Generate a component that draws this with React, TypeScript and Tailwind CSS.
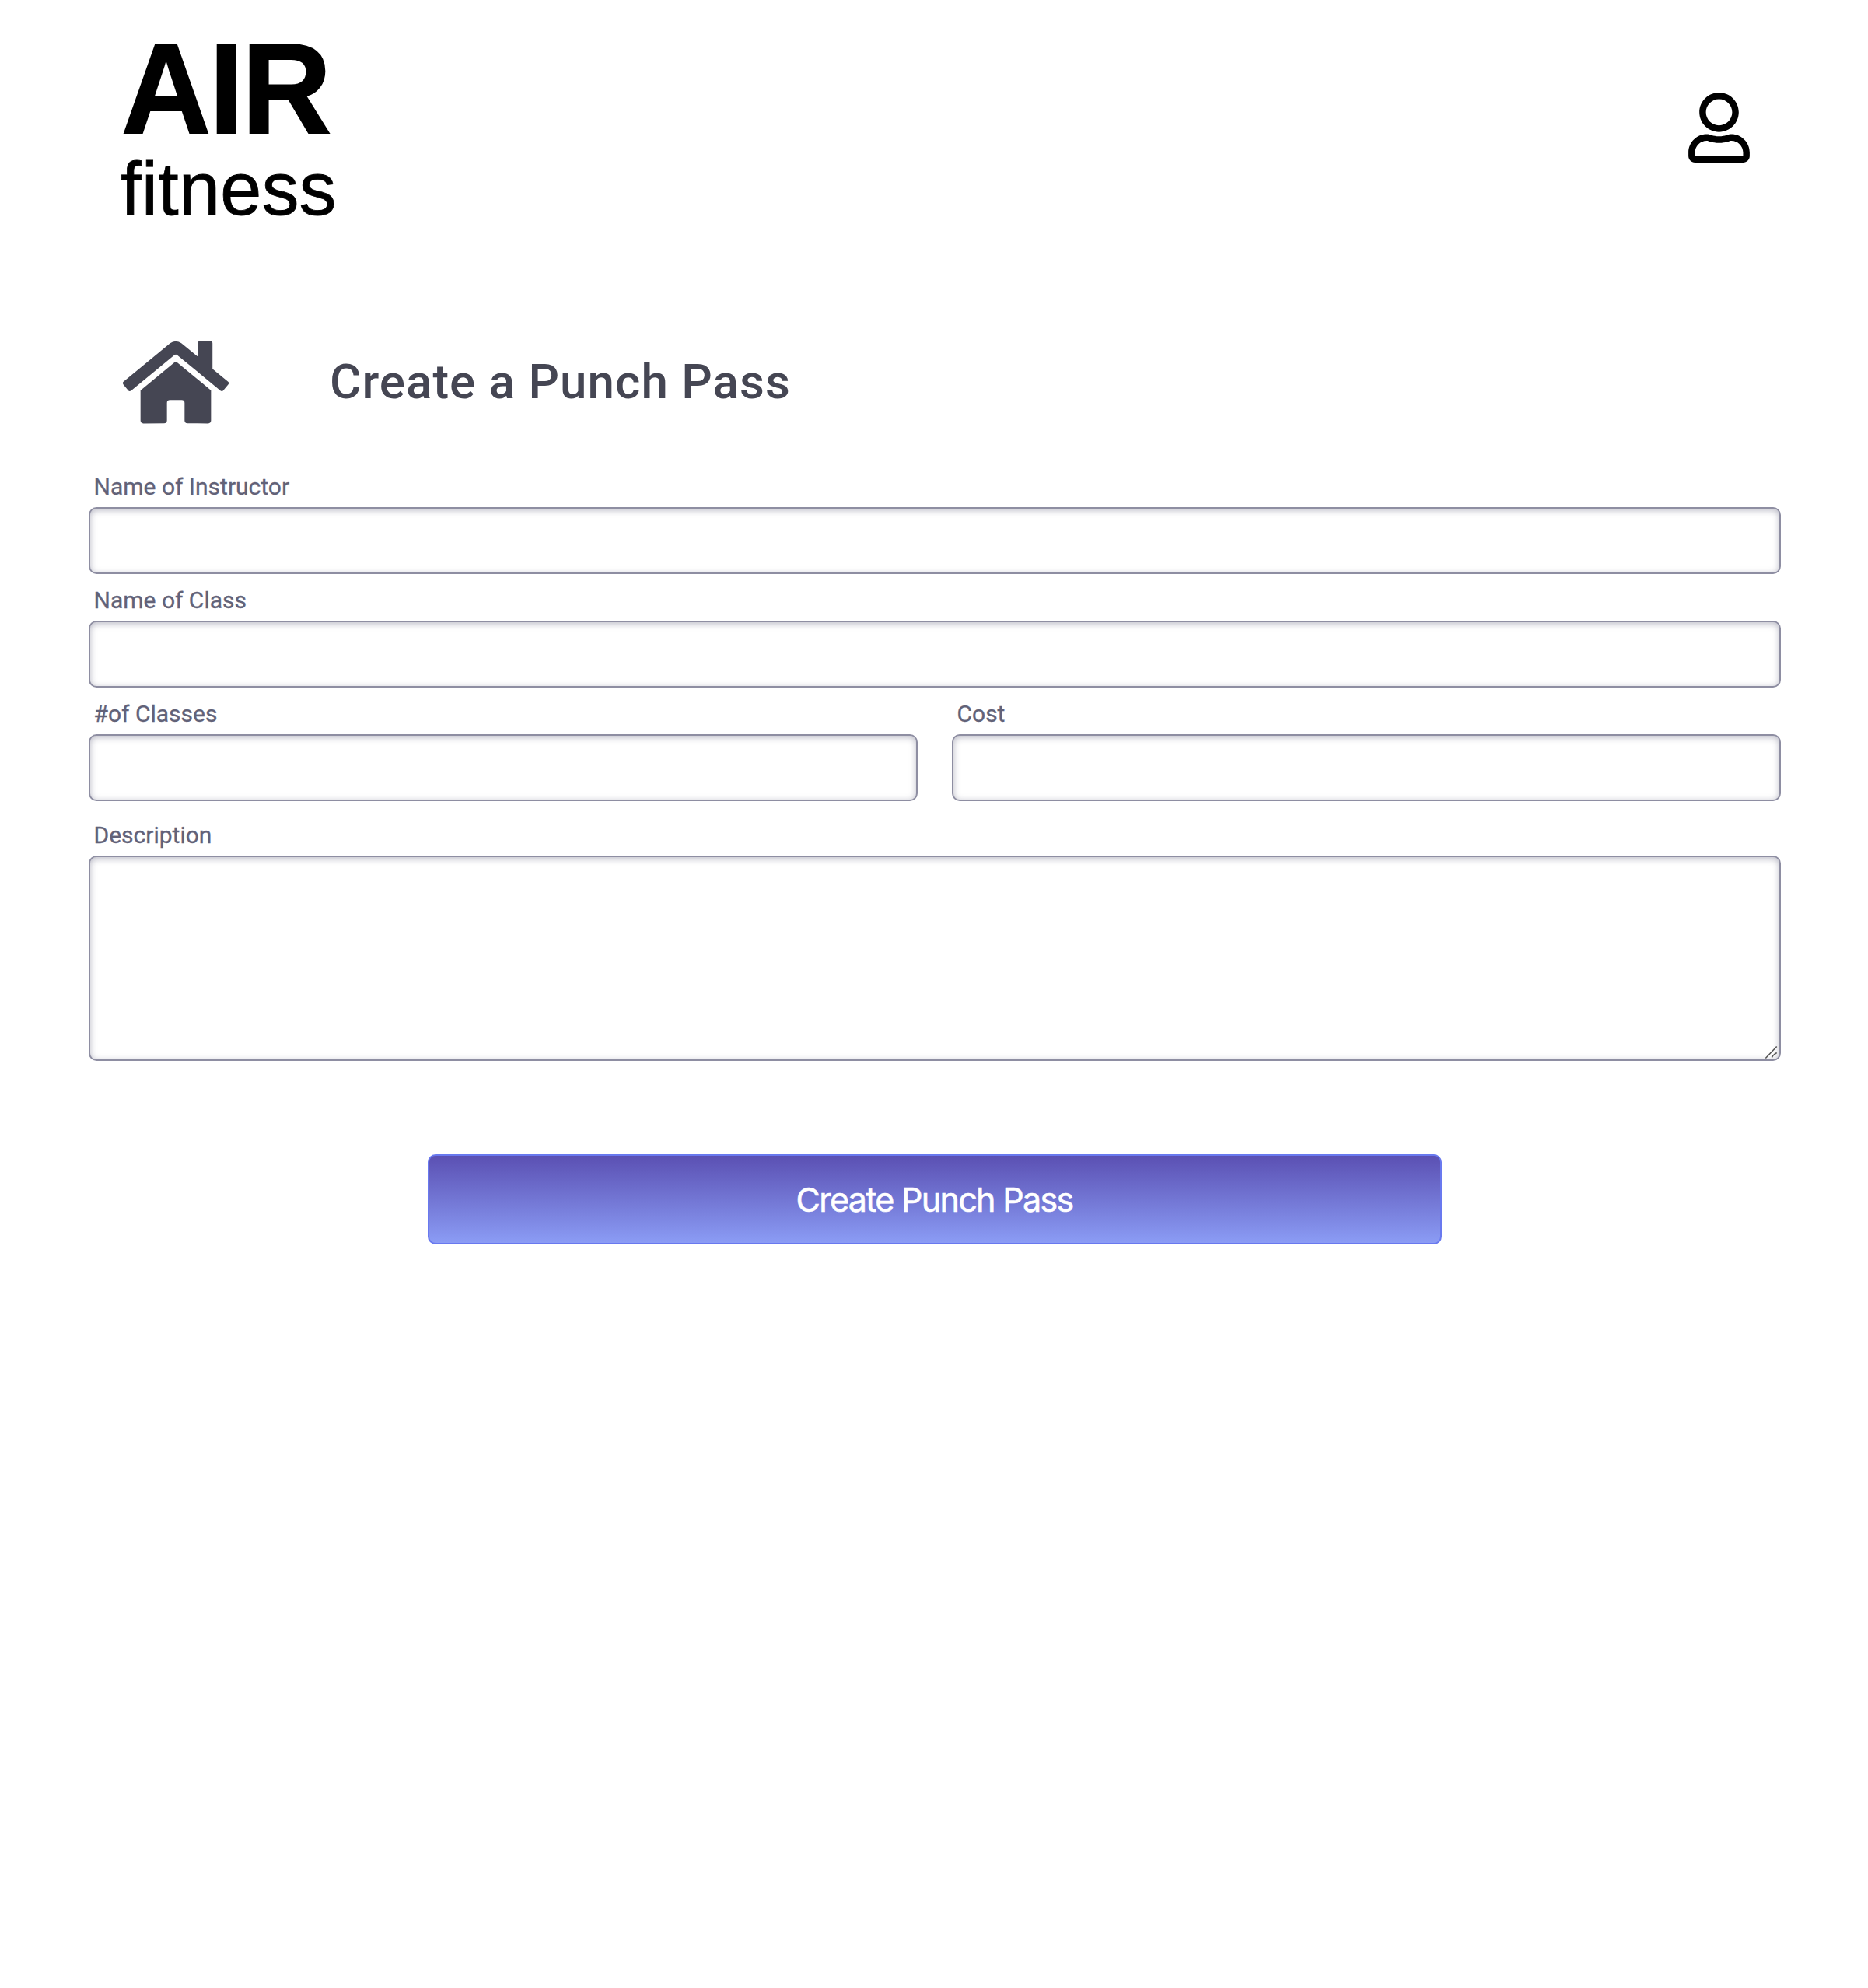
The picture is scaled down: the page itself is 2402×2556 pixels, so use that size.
import { FaHome, FaRegUser } from "react-icons/fa";

const control =
  "block w-full rounded-[10px] border-2 border-[#8e8ea2] bg-white px-4 text-[32px] text-[#454553] outline-none shadow-[inset_0_2px_8px_rgba(69,69,100,0.38)]";

function Label({ text, id }: { text: string; id: string }) {
  return (
    <label
      htmlFor={id}
      className="block h-[52px] pl-[6.5px] text-[30px] leading-[52px] text-[#626278] [-webkit-text-stroke:0.3px_#626278]"
    >
      <span>{text}</span>
    </label>
  );
}

function Field({ text, id }: { text: string; id: string }) {
  return (
    <div className="flex-1">
      <Label text={text} id={id} />
      <input id={id} type="text" className={control + " h-[86px]"} />
    </div>
  );
}

export default function App() {
  return (
    <div className="min-h-[2556px] w-full bg-white font-['Roboto',sans-serif]">
      <header className="flex h-[328px] items-start justify-between pl-[155px] pr-[152.5px]">
        <div className="pt-[30px] font-['Liberation_Sans',sans-serif] text-black">
          <div className="h-[158px] origin-left scale-x-[0.96] pl-px text-[166px] font-bold leading-[168px] tracking-[-2.2px] [-webkit-text-stroke:2px_black]">
            AIR
          </div>
          <div className="h-[110px] text-[96px] leading-[110px] [-webkit-text-stroke:0.8px_black]">fitness</div>
        </div>
        <FaRegUser className="mt-[119px] h-[90px] w-[79px] text-black" />
      </header>
      <div className="flex h-[272px] items-start pl-[158px] pt-[102px] text-[#454653]">
        <FaHome className="mt-[0.5px] h-[121px] w-[136px]" />
        <h1 className="ml-[130px] text-[62px] font-medium leading-[122px] tracking-[1px]">Create a Punch Pass</h1>
      </div>
      <form className="pl-[114px] pr-[112px]">
        <div className="flex">
          <Field text="Name of Instructor" id="instructor" />
        </div>
        <div className="mt-2 flex">
          <Field text="Name of Class" id="class" />
        </div>
        <div className="mt-2 flex gap-11">
          <Field text="#of Classes" id="count" />
          <Field text="Cost" id="cost" />
        </div>
        <div className="mt-[18px]">
          <Label text="Description" id="description" />
          <div className="relative">
            <textarea id="description" className={control + " h-[264px] resize-none"} />
            <svg className="absolute bottom-[3px] right-[4px] h-4 w-4" viewBox="0 0 16 16" fill="none" stroke="#555" strokeWidth="1.6">
              <path d="M0.3 15.5 14.7 0.5M8.3 14.5 Q10.5 10.5 14.7 8.5" />
            </svg>
          </div>
        </div>
        <button
          type="button"
          className="mx-auto mt-[120px] block h-[116px] w-[1304px] rounded-[10px] border-2 border-[#6979ef] bg-linear-to-b from-[#5b50b3] to-[#8b9cf5] pr-px font-['Inter',sans-serif] text-[43px] tracking-[-1.7px] text-white [-webkit-text-stroke:0.6px_white]"
        >
          Create Punch Pass
        </button>
      </form>
    </div>
  );
}
